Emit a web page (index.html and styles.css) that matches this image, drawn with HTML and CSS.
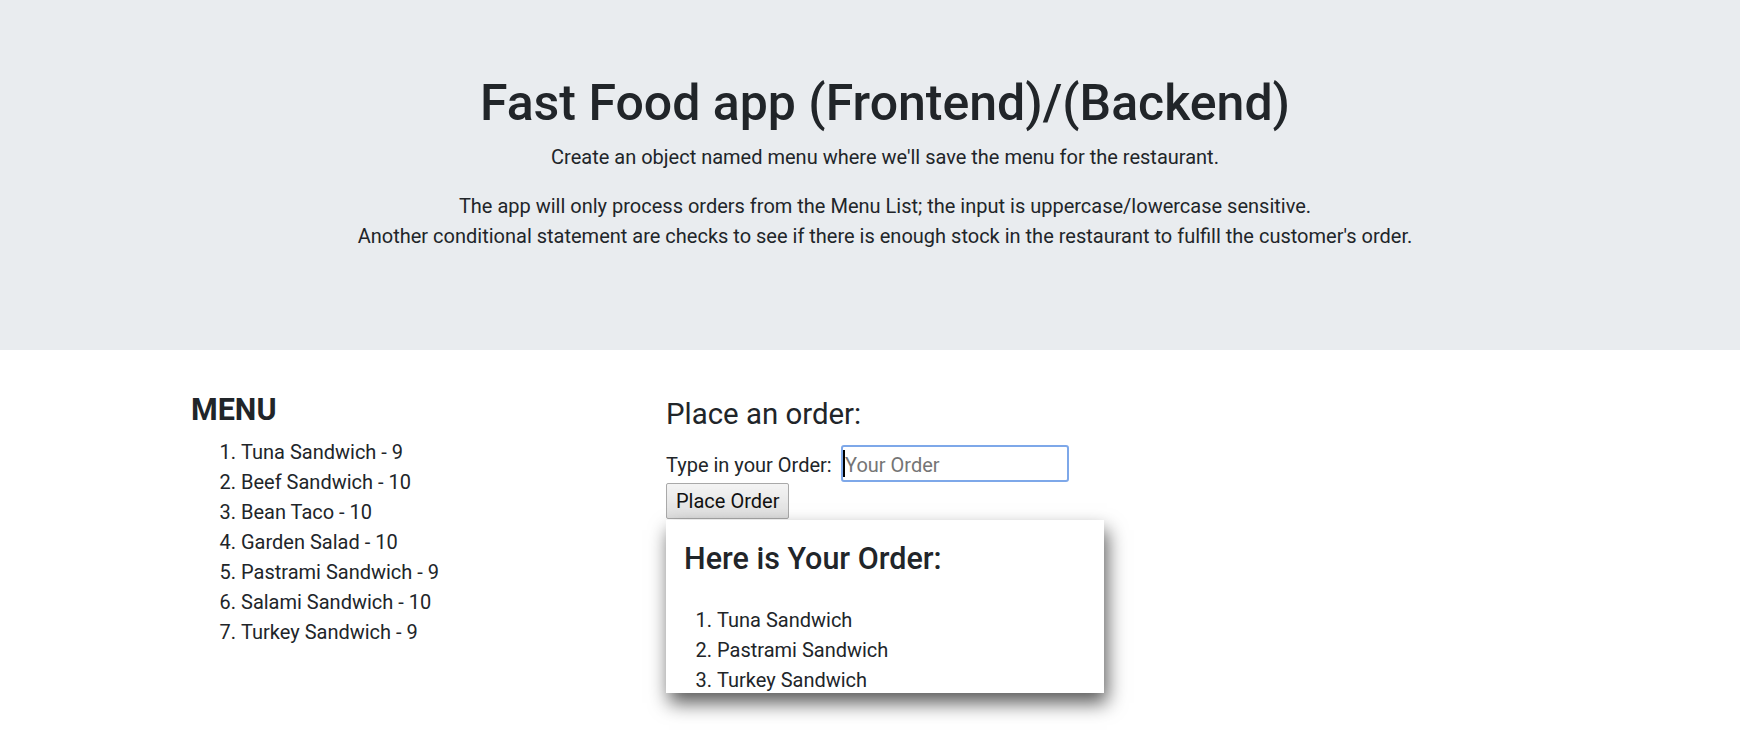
FILE: index.html
```html
<!DOCTYPE html>
<html lang="en">
<head>
<meta charset="utf-8">
<title>Fast Food app</title>
<link rel="stylesheet" href="styles.css">
</head>
<body>
<header class="jumbotron">
  <h1 class="title">Fast Food app (Frontend)/(Backend)</h1>
  <p class="lead-line">Create an object named menu where we'll save the menu for the restaurant.</p>
  <p class="lead-line last">The app will only process orders from the Menu List; the input is uppercase/lowercase sensitive.<br>Another conditional statement are checks to see if there is enough stock in the restaurant to fulfill the customer's order.</p>
</header>
<main class="container">
  <section class="menu-col">
    <h4 class="menu-title">MENU</h4>
    <ol class="menu-list">
      <li>Tuna Sandwich - 9</li>
      <li>Beef Sandwich - 10</li>
      <li>Bean Taco - 10</li>
      <li>Garden Salad - 10</li>
      <li>Pastrami Sandwich - 9</li>
      <li>Salami Sandwich - 10</li>
      <li>Turkey Sandwich - 9</li>
    </ol>
  </section>
  <section class="order-col">
    <h4 class="order-title">Place an order:</h4>
    <div class="order-row">
      <label class="order-label" for="order">Type in your Order:</label>
      <span class="input-wrap">
        <input id="order" class="order-input" type="text" placeholder="Your Order">
        <span class="caret"></span>
      </span>
    </div>
    <button class="order-btn" type="button">Place Order</button>
    <div class="order-card">
      <h4 class="card-title">Here is Your Order:</h4>
      <ol class="card-list">
        <li>Tuna Sandwich</li>
        <li>Pastrami Sandwich</li>
        <li>Turkey Sandwich</li>
      </ol>
    </div>
  </section>
</main>
</body>
</html>
```
FILE: styles.css
```css
* { box-sizing: border-box; }
html, body { margin: 0; padding: 0; }
body {
  font-family: Roboto, "Liberation Sans", sans-serif;
  font-size: 20px;
  line-height: 30px;
  color: #212529;
  background: #fff;
  min-height: 736px;
}

.jumbotron {
  background: #e9ecef;
  height: 350px;
  padding: 73px 40px 0 70px;
  text-align: center;
}
.title {
  margin: 0 0 9px;
  font-size: 50px;
  line-height: 60px;
  font-weight: 500;
}
.lead-line { margin: 0 0 19px; }
.lead-line.last { margin-bottom: 0; }

.container {
  width: 1358px;
  margin: 0 auto;
  padding: 42px 0 44px;
  display: grid;
  grid-template-columns: 475px 438px;
  align-items: start;
}

.menu-title {
  margin: 0 0 9px;
  font-size: 30.5px;
  line-height: 36px;
  font-weight: 700;
}
.menu-list {
  margin: 0;
  padding-left: 50px;
}

.order-col { display: flex; flex-direction: column; align-items: flex-start; }
.order-title {
  margin: 4px 0 13px;
  font-size: 29.4px;
  line-height: 36px;
  font-weight: 400;
}
.order-row {
  display: flex;
  align-items: baseline;
}
.order-label { flex: 0 0 175px; }
.input-wrap { position: relative; display: inline-block; }
.order-input {
  display: block;
  width: 228px;
  height: 37px;
  margin: 0;
  padding: 2px 4px 0 2px;
  border: 2px solid #7ea8e9;
  border-radius: 3px;
  font-family: Roboto, "Liberation Sans", sans-serif;
  font-size: 20px;
  color: #212529;
  background: #fff;
  outline: none;
}
.order-input::placeholder { color: #757575; }
.caret {
  position: absolute;
  left: 2px;
  top: 5px;
  width: 2px;
  height: 27px;
  background: #000;
}
.order-btn {
  margin-top: 1px;
  height: 36px;
  padding: 0 9px;
  border: 1px solid #a9a9a9;
  border-radius: 2px;
  background: linear-gradient(#f4f4f4, #dedede);
  font-family: Roboto, "Liberation Sans", sans-serif;
  font-size: 20px;
  line-height: 34px;
  color: #111;
}

.order-card {
  margin-top: 1px;
  width: 438px;
  height: 173px;
  overflow: hidden;
  background: #fff;
  padding: 21px 18px 0;
  box-shadow: 3px 10px 18px rgba(0, 0, 0, 0.65);
}
.card-title {
  margin: 0 0 28px;
  font-size: 30.5px;
  line-height: 36px;
  font-weight: 500;
}
.card-list {
  margin: 0;
  padding-left: 33px;
}
```
